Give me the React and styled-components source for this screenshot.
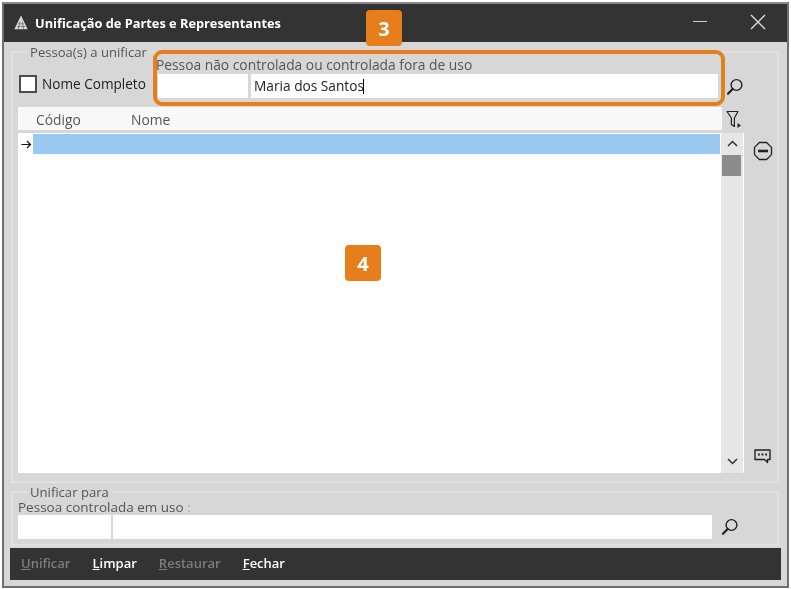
import React from 'react';
import styled, { createGlobalStyle } from 'styled-components';

const GlobalStyle = createGlobalStyle`
    html, body {
        margin: 0;
        padding: 0;
        background: #ffffff;
    }
    body {
        font-family: "Open Sans", "Liberation Sans", sans-serif;
    }
`;

const LogoIcon = () => (
    <LogoSvg width="16" height="17" viewBox="0 0 18 18" fill="none">
        <path d="M9 1 L16.5 16.5 H1.5 Z" fill="#d8d8d8" />
        <path d="M7.5 8 L6 16.5 M10.5 8 L12 16.5 M6 10.5 H12 M4.5 13.5 H13.5" stroke="#555555" strokeWidth="0.7" />
    </LogoSvg>
);

const SearchIcon = () => (
    <svg width="18" height="18" viewBox="0 0 18 18" fill="none">
        <circle cx="10.5" cy="7" r="5.4" stroke="#222222" strokeWidth="1.4" />
        <path d="M6.6 11 L2 15.8" stroke="#222222" strokeWidth="2.2" strokeLinecap="round" />
    </svg>
);

const FilterIcon = () => (
    <FilterSvg width="16" height="19" viewBox="0 0 16 19" fill="none">
        <path d="M1 1.5 H12 L8.4 8 V16.5 L5.4 14.5 V8 Z" stroke="#222222" strokeWidth="1.2" strokeLinejoin="round" />
        <path d="M11.5 13 L15 15.5 L11.5 18 Z" fill="#222222" />
    </FilterSvg>
);

const RemoveIcon = () => (
    <svg width="20" height="20" viewBox="0 0 20 20" fill="none">
        <path d="M6.4 1.5 H13.6 L18.5 6.4 V13.6 L13.6 18.5 H6.4 L1.5 13.6 V6.4 Z" stroke="#222222" strokeWidth="1.3" strokeLinejoin="round" />
        <path d="M5 10 H15" stroke="#222222" strokeWidth="2.6" />
    </svg>
);

const CommentIcon = () => (
    <svg width="17" height="15" viewBox="0 0 17 15" fill="none">
        <path d="M1 1 H16 V10.5 H13.5 V13.5 L10.5 10.5 H1 Z" stroke="#222222" strokeWidth="1.4" strokeLinejoin="round" />
        <path d="M4 5.5 H5.8 M7.6 5.5 H9.4 M11.2 5.5 H13" stroke="#222222" strokeWidth="2" />
    </svg>
);

const App = () => {
    return (
        <>
            <GlobalStyle />
            <Window>
                <TitleBar>
                    <LogoIcon />
                    <Title>Unificação de Partes e Representantes</Title>
                    <Minimize />
                    <CloseButton viewBox="0 0 16 16">
                        <path d="M1 1 L15 15 M15 1 L1 15" stroke="#dddddd" strokeWidth="1.4" />
                    </CloseButton>
                </TitleBar>

                <Content>
                    <TopGroup>
                        <Legend>Pessoa(s) a unificar</Legend>
                        <Main>
                            <SearchRow>
                                <CheckArea>
                                    <CheckBox />
                                    <CheckLabel>Nome Completo</CheckLabel>
                                </CheckArea>
                                <Field>
                                    <FieldLabel>Pessoa não controlada ou controlada fora de uso</FieldLabel>
                                    <Inputs>
                                        <Input $width={90} />
                                        <Input $width={467}>Maria dos Santos<Caret /></Input>
                                    </Inputs>
                                </Field>
                                <SearchSlot><SearchIcon /></SearchSlot>
                            </SearchRow>
                            <HeaderRow>
                                <GridHeader>
                                    <CodeColumn>Código</CodeColumn>
                                    <span>Nome</span>
                                </GridHeader>
                                <FilterIcon />
                            </HeaderRow>
                            <List>
                                <Rows>
                                    <Row>
                                        <RowArrow>
                                            <svg width="11" height="9" viewBox="0 0 11 9" fill="none">
                                                <path d="M0.5 4.5 H9.5 M6 1 L9.5 4.5 L6 8" stroke="#111111" strokeWidth="1.2" />
                                            </svg>
                                        </RowArrow>
                                        <SelectedCell />
                                    </Row>
                                </Rows>
                                <ScrollBar>
                                    <ScrollButton viewBox="0 0 11 7">
                                        <path d="M1 6 L5.5 1.5 L10 6" stroke="#333333" strokeWidth="1.5" fill="none" />
                                    </ScrollButton>
                                    <ScrollThumb />
                                    <ScrollSpacer />
                                    <ScrollButton viewBox="0 0 11 7">
                                        <path d="M1 1 L5.5 5.5 L10 1" stroke="#333333" strokeWidth="1.5" fill="none" />
                                    </ScrollButton>
                                </ScrollBar>
                            </List>
                        </Main>
                        <Side>
                            <RemoveIcon />
                            <CommentIcon />
                        </Side>
                    </TopGroup>

                    <BottomGroup>
                        <Legend>Unificar para</Legend>
                        <BottomLabel>Pessoa controlada em uso <Colon>:</Colon></BottomLabel>
                        <BottomRow>
                            <Input $width={93} />
                            <Input $width={599} />
                            <BottomSearch><SearchIcon /></BottomSearch>
                        </BottomRow>
                    </BottomGroup>

                    <Footer>
                        <FooterButton $disabled><u>U</u>nificar</FooterButton>
                        <FooterButton><u>L</u>impar</FooterButton>
                        <FooterButton $disabled><u>R</u>estaurar</FooterButton>
                        <FooterButton><u>F</u>echar</FooterButton>
                    </Footer>
                </Content>

                <Highlight />
                <Badge $left={362} $top={6}>3</Badge>
                <Badge $left={341} $top={241}>4</Badge>
            </Window>
        </>
    );
};

const Window = styled.div`
    position: relative;
    box-sizing: border-box;
    width: 787px;
    height: 586px;
    margin: 2px 0 0 2px;
    border: 2px solid #6f6f6f;
    border-top-color: #8a8a8a;
    background: #d7d7d7;
    display: flex;
    flex-direction: column;
    filter: blur(0.4px);
`;

const TitleBar = styled.div`
    height: 38px;
    flex: none;
    background: #333333;
    display: flex;
    align-items: center;
    padding: 0 21px 0 9px;
    gap: 6px;
`;

const LogoSvg = styled.svg`
    flex: none;
    margin-top: -2px;
`;

const Title = styled.div`
    flex: 1;
    color: #ffffff;
    font-size: 12.8px;
    font-weight: 700;
    margin-top: -1px;
`;

const Minimize = styled.div`
    width: 14px;
    height: 1px;
    background: #d0d0d0;
    margin-right: 37px;
    margin-top: -3px;
`;

const CloseButton = styled.svg`
    width: 16px;
    height: 16px;
    margin-top: -2px;
`;

const Content = styled.div`
    flex: 1;
    display: flex;
    flex-direction: column;
    padding: 2px 6px 0 7px;
`;

const TopGroup = styled.fieldset`
    box-sizing: border-box;
    margin: 0;
    padding: 0 0 7px 5px;
    min-width: 0;
    width: 768px;
    height: 439px;
    border: 2px solid #e0e0e0;
    display: flex;
`;

const Legend = styled.legend`
    margin-left: 9px;
    padding: 0 3px;
    font-size: 13.1px;
    line-height: 16px;
    color: #555555;
`;

const Main = styled.div`
    width: 726px;
    flex: none;
    display: flex;
    flex-direction: column;
`;

const SearchRow = styled.div`
    display: flex;
    align-items: flex-end;
    margin-top: -2px;
    height: 40px;
    flex: none;
`;

const CheckArea = styled.div`
    width: 140px;
    flex: none;
    display: flex;
    align-items: center;
    gap: 5px;
    padding: 0 0 5px 1px;
    box-sizing: border-box;
`;

const CheckBox = styled.div`
    box-sizing: border-box;
    width: 18px;
    height: 18px;
    flex: none;
    background: #ffffff;
    border: 2px solid #4d4d4d;
`;

const CheckLabel = styled.span`
    font-size: 13.6px;
    color: #222222;
    white-space: nowrap;
`;

const Field = styled.div`
    width: 560px;
    flex: none;
    display: flex;
    flex-direction: column;
`;

const FieldLabel = styled.div`
    font-size: 13.8px;
    line-height: 14px;
    padding-bottom: 2px;
    color: #555555;
    white-space: nowrap;
    margin-left: -2px;
`;

const Inputs = styled.div`
    display: flex;
    gap: 3px;
`;

const Input = styled.div`
    box-sizing: border-box;
    width: ${props => props.$width}px;
    height: 24px;
    flex: none;
    background: #ffffff;
    padding-left: 3px;
    font-size: 13.7px;
    line-height: 24px;
    color: #222222;
    white-space: nowrap;
`;

const Caret = styled.span`
    display: inline-block;
    width: 1px;
    height: 15px;
    background: #000000;
    vertical-align: -3px;
    margin-left: -1px;
`;

const SearchSlot = styled.div`
    margin-left: 8px;
    height: 18px;
    margin-bottom: 2px;
`;

const HeaderRow = styled.div`
    display: flex;
    align-items: center;
    gap: 4px;
    margin-top: 9px;
    height: 23px;
    flex: none;
    margin-right: -1px;
`;

const FilterSvg = styled.svg`
    flex: none;
    margin-top: 2px;
`;

const GridHeader = styled.div`
    box-sizing: border-box;
    width: 704px;
    height: 23px;
    flex: none;
    background: #f8f8f8;
    display: flex;
    align-items: center;
    padding: 1px 0 0 18px;
    font-size: 13.8px;
    color: #555555;
`;

const CodeColumn = styled.span`
    width: 95px;
`;

const List = styled.div`
    margin-top: 3px;
    height: 340px;
    flex: none;
    background: #ffffff;
    display: flex;
    padding-right: 1px;
    box-sizing: border-box;
`;

const Rows = styled.div`
    flex: 1;
    padding-top: 1px;
`;

const Row = styled.div`
    display: flex;
    height: 20px;
`;

const RowArrow = styled.div`
    width: 15px;
    flex: none;
    display: flex;
    align-items: center;
    justify-content: center;
    padding-left: 2px;
    box-sizing: border-box;
`;

const SelectedCell = styled.div`
    flex: 1;
    background: #99c9ef;
    margin-right: 1px;
`;

const ScrollBar = styled.div`
    width: 22px;
    flex: none;
    background: #e6e6e6;
    display: flex;
    flex-direction: column;
    align-items: center;
`;

const ScrollButton = styled.svg`
    width: 11px;
    height: 7px;
    flex: none;
    margin: 7px 0 8px;
`;

const ScrollThumb = styled.div`
    width: 19px;
    height: 21px;
    flex: none;
    background: #8c8c8c;
    margin-left: -2px;
`;

const ScrollSpacer = styled.div`
    flex: 1;
`;

const Side = styled.div`
    flex: 1;
    display: flex;
    flex-direction: column;
    align-items: center;
    justify-content: space-between;
    padding: 81px 0 9px 4px;
    box-sizing: border-box;
`;

const BottomGroup = styled.fieldset`
    box-sizing: border-box;
    margin: 1px 0 0 0;
    padding: 0 0 4px 5px;
    min-width: 0;
    width: 768px;
    height: 62px;
    border: 2px solid #e0e0e0;
`;

const BottomLabel = styled.div`
    font-size: 13.5px;
    line-height: 14px;
    color: #555555;
`;

const Colon = styled.span`
    color: #b9a68f;
`;

const BottomRow = styled.div`
    display: flex;
    gap: 2px;
    align-items: center;
    margin-top: 1px;
`;

const BottomSearch = styled.div`
    margin-left: 7px;
    height: 18px;
`;

const Footer = styled.div`
    margin: 2px 0 0 -1px;
    width: 771px;
    height: 32px;
    flex: none;
    background: #333333;
    display: flex;
    align-items: center;
    gap: 22px;
    padding: 0 0 3px 11px;
    box-sizing: border-box;
`;

const FooterButton = styled.span`
    font-size: 13px;
    font-weight: 600;
    color: ${props => (props.$disabled ? '#7d7d7d' : '#ffffff')};
`;

const Highlight = styled.div`
    position: absolute;
    left: 149px;
    top: 46px;
    width: 572px;
    height: 56px;
    box-sizing: border-box;
    border: 4px solid #e67e1c;
    border-radius: 9px;
`;

const Badge = styled.div`
    position: absolute;
    left: ${props => props.$left}px;
    top: ${props => props.$top}px;
    width: 36px;
    height: 36px;
    border-radius: 4px;
    background: #e67e1c;
    color: #ffffff;
    font-size: 20px;
    font-weight: 700;
    display: flex;
    align-items: center;
    justify-content: center;
`;

export default App;
